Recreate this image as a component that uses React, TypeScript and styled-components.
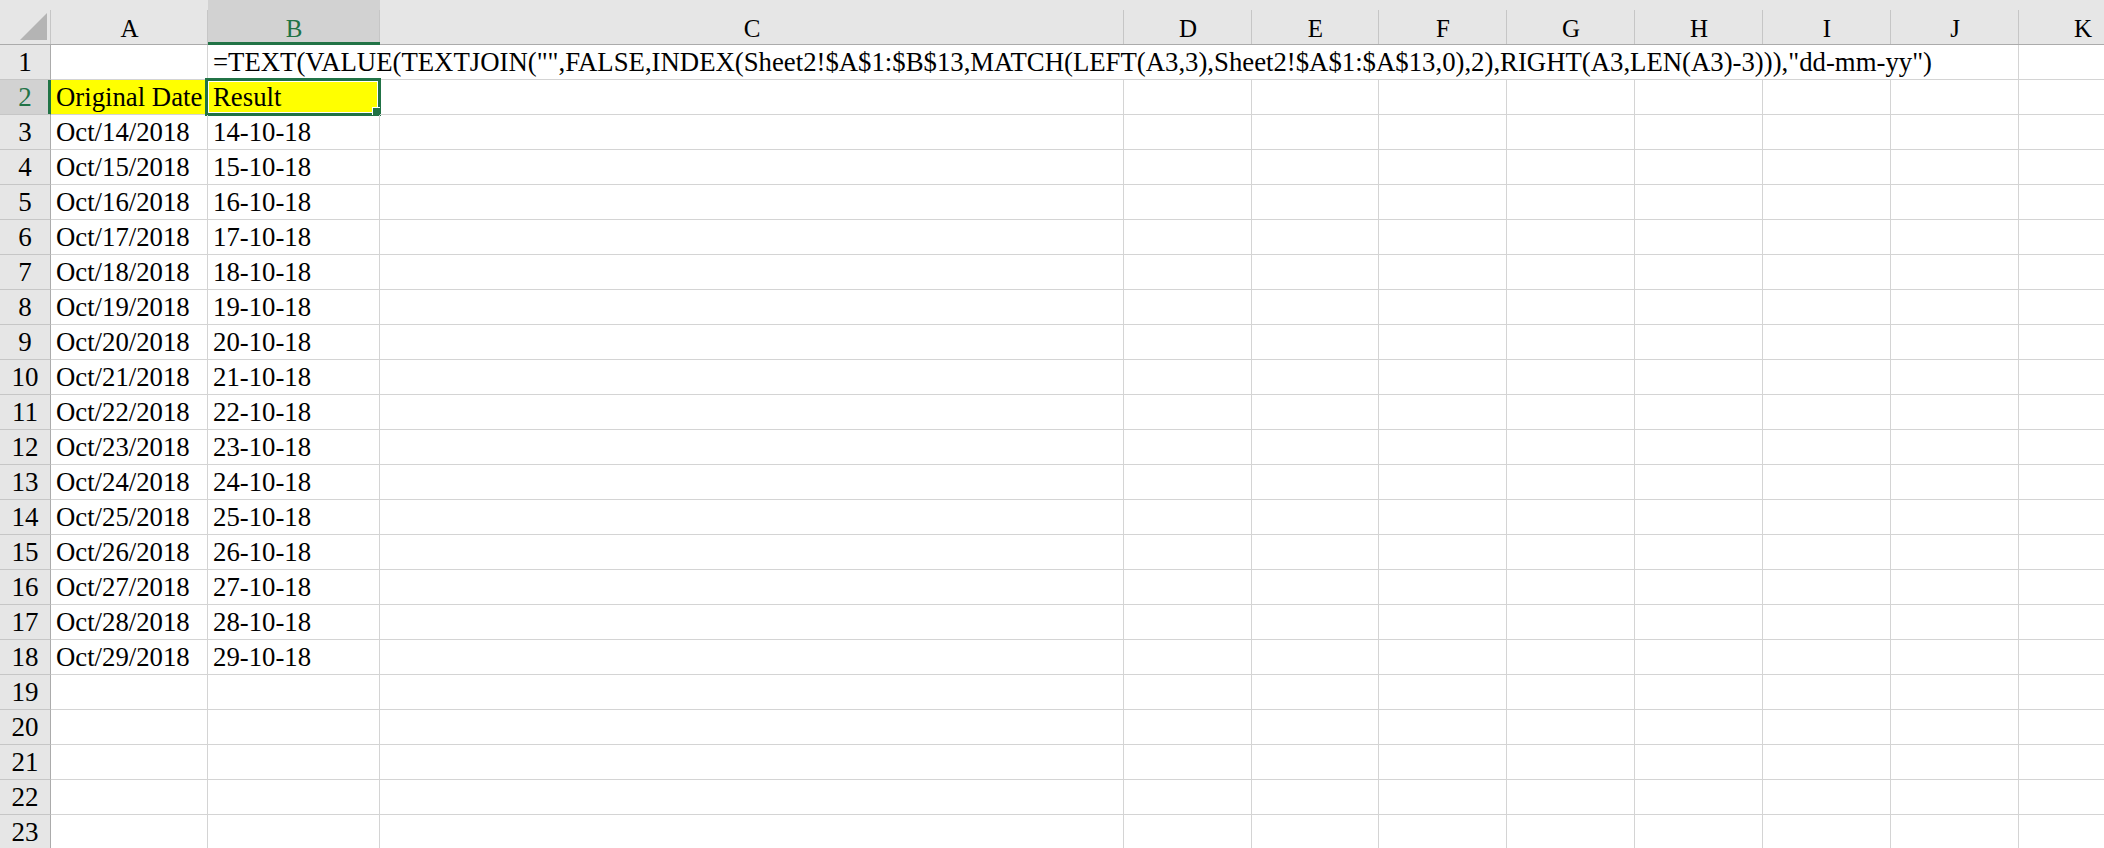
import React from "react";
import styled, { createGlobalStyle, css } from "styled-components";

const GREEN = "#217346";

const GlobalStyle = createGlobalStyle`
  html, body {
    margin: 0;
    padding: 0;
    background: #ffffff;
    overflow: hidden;
  }
`;

const columns = ["A", "B", "C", "D", "E", "F", "G", "H", "I", "J", "K"];
// row header first, then A..K
const widths = [51, 157, 172, 744, 128, 127, 128, 128, 128, 128, 128, 128];

const formula =
  '=TEXT(VALUE(TEXTJOIN("",FALSE,INDEX(Sheet2!$A$1:$B$13,MATCH(LEFT(A3,3),Sheet2!$A$1:$A$13,0),2),RIGHT(A3,LEN(A3)-3))),"dd-mm-yy")';

const dates = Array.from({ length: 16 }, (_, i) => 14 + i);

const Sheet = styled.div`
  display: grid;
  grid-template-columns: ${widths.map((w) => `${w}px`).join(" ")};
  grid-template-rows: 45px repeat(23, 35px);
  width: max-content;
  font-family: "Liberation Serif", "Times New Roman", serif;
  color: #000000;
`;

const headerSeparator = css`
  background-image: linear-gradient(#c6c6c6, #c6c6c6);
  background-repeat: no-repeat;
  background-position: right bottom;
  background-size: 1px calc(100% - 10px);
`;

const Corner = styled.div`
  box-sizing: border-box;
  background-color: #e6e6e6;
  ${headerSeparator};
  border-bottom: 1px solid #ababab;
  display: flex;
  align-items: flex-end;
  justify-content: flex-end;
  padding: 0 3px 3px 0;
`;

const ColHeader = styled.div<{ $selected?: boolean }>`
  box-sizing: border-box;
  background-color: ${(p) => (p.$selected ? "#d2d2d2" : "#e6e6e6")};
  ${headerSeparator};
  border-bottom: 1px solid ${(p) => (p.$selected ? GREEN : "#ababab")};
  box-shadow: ${(p) => (p.$selected ? `inset 0 -2px 0 ${GREEN}` : "none")};
  color: ${(p) => (p.$selected ? GREEN : "#000000")};
  font-size: 25px;
  line-height: 25px;
  padding-top: 16px;
  text-align: center;
`;

const RowHeader = styled.div<{ $selected?: boolean }>`
  box-sizing: border-box;
  background: ${(p) => (p.$selected ? "#d2d2d2" : "#e6e6e6")};
  border-right: 1px solid ${(p) => (p.$selected ? GREEN : "#ababab")};
  border-bottom: 1px solid #c6c6c6;
  box-shadow: ${(p) => (p.$selected ? `inset -2px 0 0 ${GREEN}` : "none")};
  color: ${(p) => (p.$selected ? GREEN : "#000000")};
  font-size: 27px;
  line-height: 27px;
  padding-top: 4px;
  text-align: center;
`;

const Cell = styled.div<{ $fill?: string; $span?: number; $open?: boolean }>`
  box-sizing: border-box;
  position: relative;
  grid-column: ${(p) => (p.$span ? `span ${p.$span}` : "auto")};
  background: ${(p) => p.$fill ?? "transparent"};
  border-right: 1px solid #d4d4d4;
  border-bottom: 1px solid #d4d4d4;
  font-size: 26.75px;
  line-height: 27px;
  padding: 4px 0 0 5px;
  white-space: nowrap;
  overflow: ${(p) => (p.$open ? "visible" : "hidden")};
`;

const Selection = styled.div`
  position: absolute;
  left: -3px;
  top: -2px;
  right: -2px;
  bottom: -2px;
  border: 3px solid ${GREEN};
  box-shadow: inset 0 0 0 1px #ffffff;
  pointer-events: none;
`;

const FillHandle = styled.div`
  position: absolute;
  right: -3px;
  bottom: -3px;
  width: 8px;
  height: 8px;
  background: ${GREEN};
  box-shadow: -1px -1px 0 #ffffff;
`;

function CornerTriangle() {
  return (
    <svg width="28" height="28" viewBox="0 0 28 28">
      <polygon points="0,27 27,27 27,0" fill="#b4b4b4" />
    </svg>
  );
}

function EmptyCells({ count }: { count: number }) {
  return (
    <>
      {Array.from({ length: count }, (_, i) => (
        <Cell key={i} />
      ))}
    </>
  );
}

export default function App() {
  // columns C..K after A and B
  const rest = columns.length - 2;

  return (
    <>
      <GlobalStyle />
      <Sheet>
        <Corner>
          <CornerTriangle />
        </Corner>
        {columns.map((c) => (
          <ColHeader key={c} $selected={c === "B"}>
            {c}
          </ColHeader>
        ))}

        {/* row 1: the formula overflows across B..J */}
        <RowHeader>1</RowHeader>
        <Cell />
        <Cell $span={9} $open>
          {formula}
        </Cell>
        <EmptyCells count={1} />

        {/* row 2: headings, B2 selected */}
        <RowHeader $selected>2</RowHeader>
        <Cell $fill="#ffff00">Original Date</Cell>
        <Cell $fill="#ffff00" $open>
          Result
          <Selection>
            <FillHandle />
          </Selection>
        </Cell>
        <EmptyCells count={rest} />

        {dates.map((d, i) => (
          <React.Fragment key={d}>
            <RowHeader>{i + 3}</RowHeader>
            <Cell>Oct/{d}/2018</Cell>
            <Cell>{d}-10-18</Cell>
            <EmptyCells count={rest} />
          </React.Fragment>
        ))}

        {[19, 20, 21, 22, 23].map((r) => (
          <React.Fragment key={r}>
            <RowHeader>{r}</RowHeader>
            <EmptyCells count={columns.length} />
          </React.Fragment>
        ))}
      </Sheet>
    </>
  );
}
